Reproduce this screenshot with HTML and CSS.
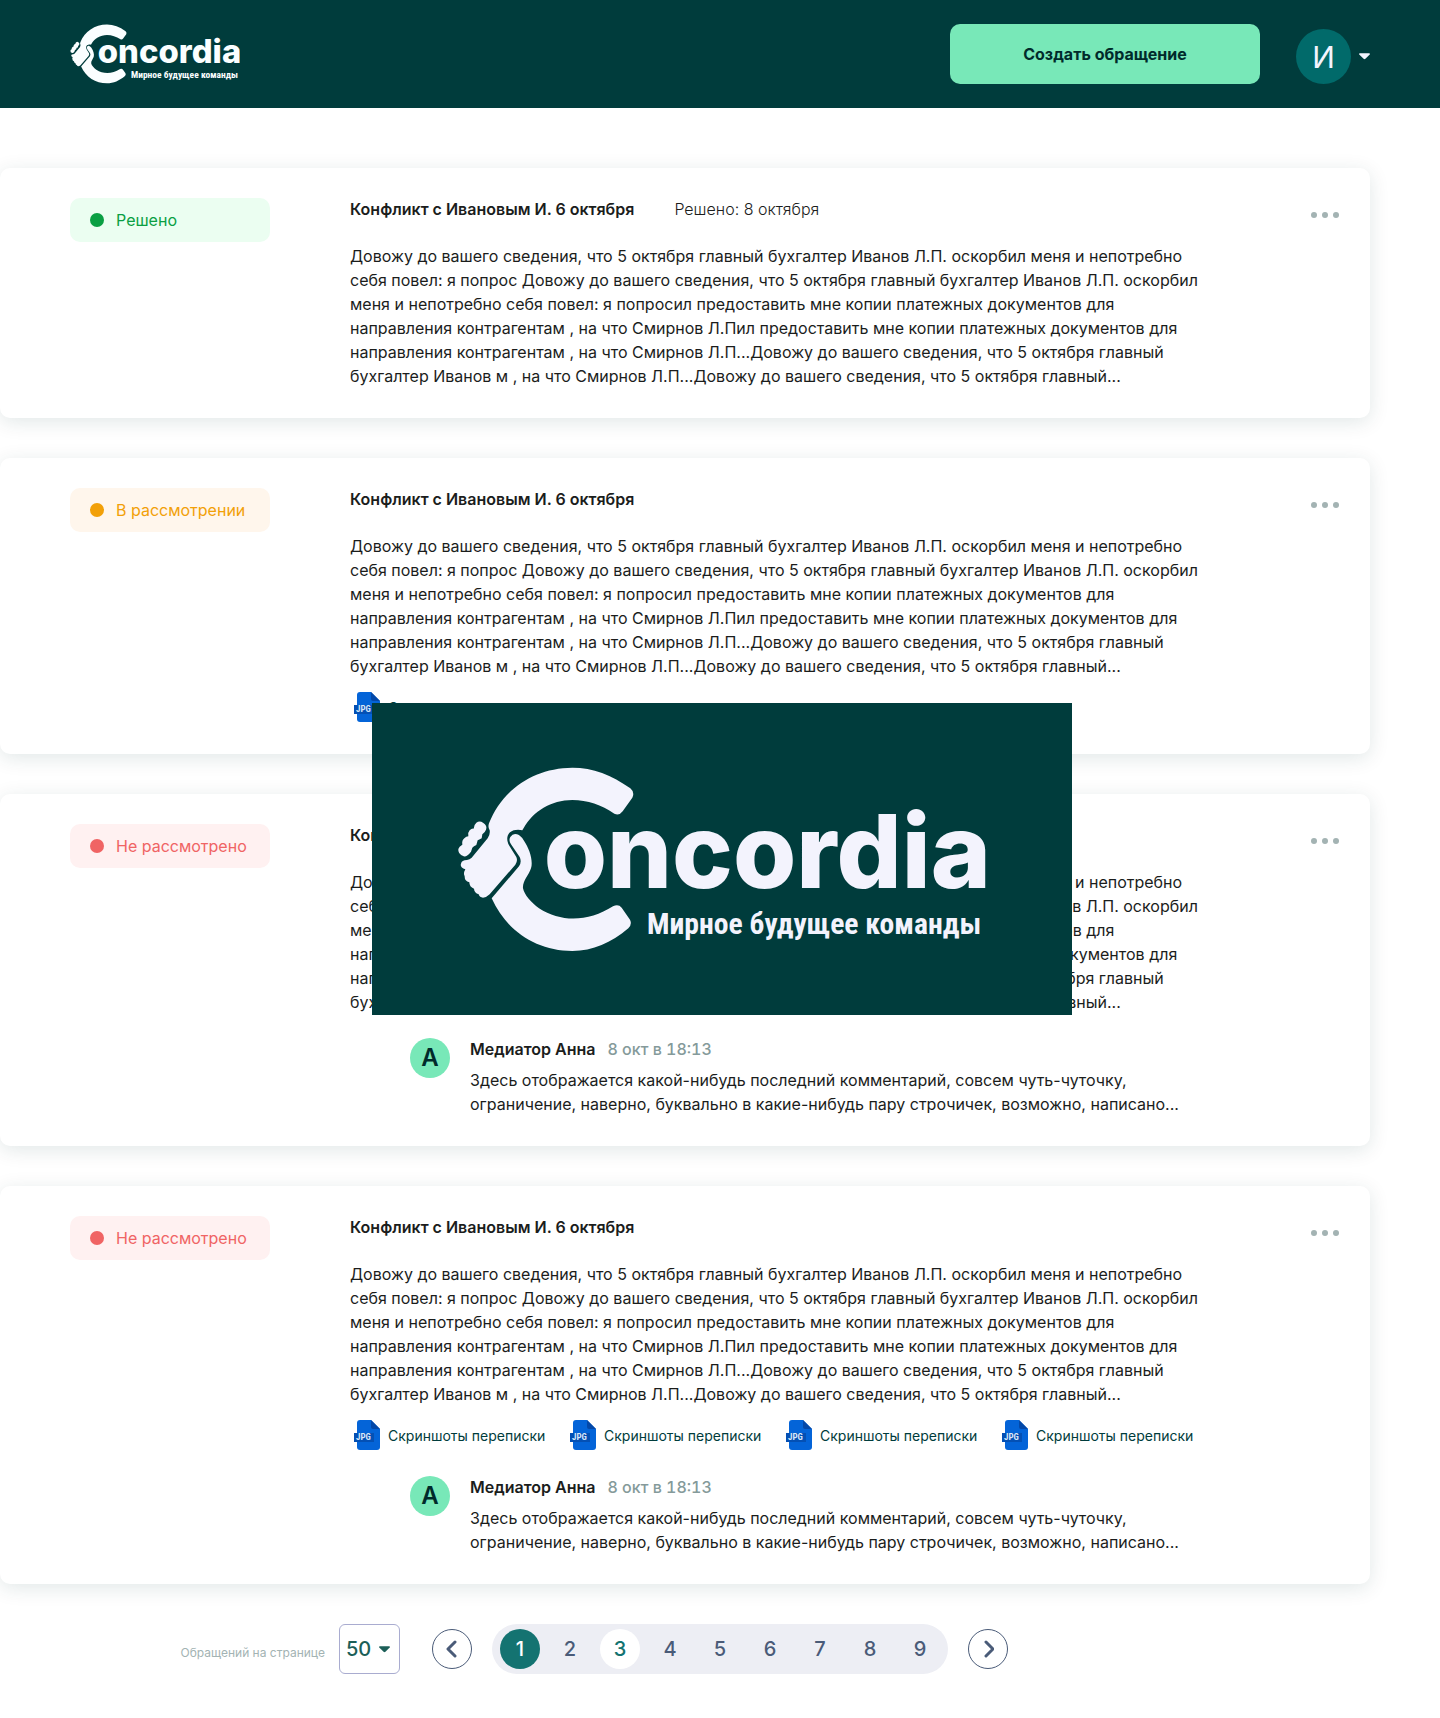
FILE: index.html
```html
<!DOCTYPE html>
<html lang="ru">
<head>
<meta charset="utf-8">
<meta name="viewport" content="width=device-width, initial-scale=1">
<title>Concordia — обращения</title>
<link rel="stylesheet" href="styles.css">
</head>
<body>
<svg class="sprite" aria-hidden="true">
  <symbol id="logo" viewBox="54 45 1590 561">
    <path d="M150 217C190 115 285 51 400 50C462 50 518 72 574 112Q588 124 580 140L551 181Q541 195 526 188C487 162 446 147 400 147C336 148 283 180 254 231L250 238C238 235 222 236 213 244C202 254 203 270 210 283L232 318Q237 330 229 341L152 430Q142 440 132 440Q122 440 119 430Q106 426 105 413Q91 408 91 394Q76 390 77 375Q72 368 79 355Q62 350 66 338Q68 327 84 327Q92 326 98 320L146 262Q154 250 152 238Q146 228 150 217Z"/>
    <path d="M112 215Q122 208 132 215Q146 224 141 236Q138 244 130 250L128 262Q120 266 116 268L112 282Q104 286 100 290L96 302Q84 318 74 316Q56 310 58 294Q60 286 70 281Q68 268 76 262Q82 256 88 256Q86 244 92 238Q98 232 104 233Q104 222 112 215Z"/>
    <path d="M214 258Q222 246 234 250Q246 254 254 268C272 294 283 330 276 352C270 372 250 390 252 412C256 432 276 454 300 472C368 516 450 512 522 466Q538 458 548 470L573 506Q580 520 568 532C516 576 462 600 400 600C292 600 202 540 158 442L240 346Q249 333 242 318L216 280Q208 268 214 258Z"/>
    <text class="logo-name" x="314" y="412">oncordia</text>
    <text class="logo-tagline" x="624" y="550">Мирное будущее команды</text>
  </symbol>
  <symbol id="jpg" viewBox="0 0 38 32">
    <path fill="#0464d8" d="M10 0H21L30 9V27Q30 30 27 30H10Q7 30 7 27V3Q7 0 10 0Z"/>
    <path fill="#0448a8" d="M21 0L30 9H23Q21 9 21 7Z"/>
    <path fill="#0450b4" d="M4 13H24V22H4Z"/>
    <text class="jpg-text" x="6" y="20">JPG</text>
  </symbol>
  <symbol id="dots" viewBox="0 0 28 6">
    <circle cx="3" cy="3" r="3"/><circle cx="14" cy="3" r="3"/><circle cx="25" cy="3" r="3"/>
  </symbol>
  <symbol id="caret" viewBox="0 0 12 7">
    <path d="M1 0H11Q12 0 12 1L7 6Q6 7 5 6L0 1Q0 0 1 0Z"/>
  </symbol>
</svg>

<header class="header">
  <a class="brand" href="#" aria-label="Concordia"><svg><use href="#logo"/></svg></a>
  <button class="create" type="button">Создать обращение</button>
  <button class="user" type="button" aria-label="Профиль">
    <span class="user-avatar">И</span>
    <svg class="caret"><use href="#caret"/></svg>
  </button>
</header>

<main class="main">
  <article class="card">
    <div class="status status-done">Решено</div>
    <div class="content">
      <div class="heading"><h2>Конфликт с Ивановым И. 6 октября</h2><span class="resolved">Решено: 8 октября</span></div>
      <p>Довожу до вашего сведения, что 5 октября главный бухгалтер Иванов Л.П. оскорбил меня и непотребно себя повел: я попрос Довожу до вашего сведения, что 5 октября главный бухгалтер Иванов Л.П. оскорбил меня и непотребно себя повел: я попросил предоставить мне копии платежных документов для направления контрагентам , на что Смирнов Л.Пил предоставить мне копии платежных документов для направления контрагентам , на что Смирнов Л.П...Довожу до вашего сведения, что 5 октября главный бухгалтер Иванов м , на что Смирнов Л.П...Довожу до вашего сведения, что 5 октября главный...</p>
    </div>
    <button class="menu" type="button" aria-label="Действия"><svg><use href="#dots"/></svg></button>
  </article>

  <article class="card">
    <div class="status status-review">В рассмотрении</div>
    <div class="content">
      <div class="heading"><h2>Конфликт с Ивановым И. 6 октября</h2></div>
      <p>Довожу до вашего сведения, что 5 октября главный бухгалтер Иванов Л.П. оскорбил меня и непотребно себя повел: я попрос Довожу до вашего сведения, что 5 октября главный бухгалтер Иванов Л.П. оскорбил меня и непотребно себя повел: я попросил предоставить мне копии платежных документов для направления контрагентам , на что Смирнов Л.Пил предоставить мне копии платежных документов для направления контрагентам , на что Смирнов Л.П...Довожу до вашего сведения, что 5 октября главный бухгалтер Иванов м , на что Смирнов Л.П...Довожу до вашего сведения, что 5 октября главный...</p>
      <div class="files">
        <a href="#"><svg><use href="#jpg"/></svg>Скриншоты переписки</a>
      </div>
    </div>
    <button class="menu" type="button" aria-label="Действия"><svg><use href="#dots"/></svg></button>
  </article>

  <article class="card">
    <div class="status status-new">Не рассмотрено</div>
    <div class="content">
      <div class="heading"><h2>Конфликт с Ивановым И. 6 октября</h2></div>
      <p>Довожу до вашего сведения, что 5 октября главный бухгалтер Иванов Л.П. оскорбил меня и непотребно себя повел: я попрос Довожу до вашего сведения, что 5 октября главный бухгалтер Иванов Л.П. оскорбил меня и непотребно себя повел: я попросил предоставить мне копии платежных документов для направления контрагентам , на что Смирнов Л.Пил предоставить мне копии платежных документов для направления контрагентам , на что Смирнов Л.П...Довожу до вашего сведения, что 5 октября главный бухгалтер Иванов м , на что Смирнов Л.П...Довожу до вашего сведения, что 5 октября главный...</p>
      <div class="comment">
        <span class="comment-avatar">А</span>
        <div>
          <div class="comment-head"><b>Медиатор Анна</b><time>8 окт в 18:13</time></div>
          <p>Здесь отображается какой-нибудь последний комментарий, совсем чуть-чуточку, ограничение, наверно, буквально в какие-нибудь пару строчичек, возможно, написано...</p>
        </div>
      </div>
    </div>
    <button class="menu" type="button" aria-label="Действия"><svg><use href="#dots"/></svg></button>
  </article>

  <article class="card">
    <div class="status status-new">Не рассмотрено</div>
    <div class="content">
      <div class="heading"><h2>Конфликт с Ивановым И. 6 октября</h2></div>
      <p>Довожу до вашего сведения, что 5 октября главный бухгалтер Иванов Л.П. оскорбил меня и непотребно себя повел: я попрос Довожу до вашего сведения, что 5 октября главный бухгалтер Иванов Л.П. оскорбил меня и непотребно себя повел: я попросил предоставить мне копии платежных документов для направления контрагентам , на что Смирнов Л.Пил предоставить мне копии платежных документов для направления контрагентам , на что Смирнов Л.П...Довожу до вашего сведения, что 5 октября главный бухгалтер Иванов м , на что Смирнов Л.П...Довожу до вашего сведения, что 5 октября главный...</p>
      <div class="files">
        <a href="#"><svg><use href="#jpg"/></svg>Скриншоты переписки</a>
        <a href="#"><svg><use href="#jpg"/></svg>Скриншоты переписки</a>
        <a href="#"><svg><use href="#jpg"/></svg>Скриншоты переписки</a>
        <a href="#"><svg><use href="#jpg"/></svg>Скриншоты переписки</a>
      </div>
      <div class="comment">
        <span class="comment-avatar">А</span>
        <div>
          <div class="comment-head"><b>Медиатор Анна</b><time>8 окт в 18:13</time></div>
          <p>Здесь отображается какой-нибудь последний комментарий, совсем чуть-чуточку, ограничение, наверно, буквально в какие-нибудь пару строчичек, возможно, написано...</p>
        </div>
      </div>
    </div>
    <button class="menu" type="button" aria-label="Действия"><svg><use href="#dots"/></svg></button>
  </article>

  <div class="splash"><svg role="img" aria-label="Concordia"><use href="#logo"/></svg></div>
</main>

<footer class="footer">
  <div class="page-size">
    <label for="size">Обращений на странице</label>
    <div class="select">
      <select id="size"><option>50</option></select>
      <svg class="caret"><use href="#caret"/></svg>
    </div>
  </div>
  <nav class="pager" aria-label="Страницы">
    <button class="arrow" type="button" aria-label="Назад"><svg viewBox="0 0 12 18"><path d="M9 2L2 9L9 16"/></svg></button>
    <div class="pages">
      <a class="current" href="#">1</a><a href="#">2</a><a class="hover" href="#">3</a><a href="#">4</a><a href="#">5</a><a href="#">6</a><a href="#">7</a><a href="#">8</a><a href="#">9</a>
    </div>
    <button class="arrow" type="button" aria-label="Вперёд"><svg viewBox="0 0 12 18"><path d="M4 2L11 9L4 16"/></svg></button>
  </nav>
</footer>
</body>
</html>
```
FILE: styles.css
```css
* {
  box-sizing: border-box;
}

body {
  margin: 0;
  background: #fff;
  color: #1b1d1c;
  font: 400 16px/24px Inter, "Liberation Sans", sans-serif;
}

h2,
p {
  margin: 0;
}

a {
  color: inherit;
  text-decoration: none;
}

button,
select {
  margin: 0;
  padding: 0;
  border: 0;
  background: none;
  color: inherit;
  font: inherit;
  cursor: pointer;
}

svg {
  display: block;
}

.sprite {
  position: absolute;
  width: 0;
  height: 0;
}

.logo-name {
  font: 800 307px Inter, sans-serif;
}

.logo-tagline {
  font: 700 89px "Roboto Condensed", Roboto, sans-serif;
}

.jpg-text {
  fill: #d6e6fb;
  font: 700 9px "Roboto Condensed", Roboto, sans-serif;
}

/* Header */

.header {
  display: flex;
  align-items: flex-end;
  padding: 24px 70px;
  background: #003c3c;
}

.brand {
  margin-right: auto;
}

.brand svg {
  width: 170px;
  height: 60px;
  fill: #fafeff;
}

.create {
  width: 310px;
  height: 60px;
  border-radius: 10px;
  background: #78e8b8;
  color: #002b2b;
  font-weight: 700;
}

.user {
  display: flex;
  align-items: center;
  gap: 8px;
  margin-left: 36px;
  color: #f3f4fe;
}

.user-avatar {
  display: grid;
  place-items: center;
  width: 55px;
  height: 55px;
  border-radius: 50%;
  background: #016a6a;
  font-size: 30px;
}

.caret {
  width: 11px;
  height: 7px;
  fill: currentColor;
}

/* Cards */

.main {
  position: relative;
  display: grid;
  gap: 40px;
  padding: 60px 70px 40px 0;
}

.card {
  display: flex;
  align-items: flex-start;
  padding: 30px 31px 30px 70px;
  border-radius: 10px;
  background: #fff;
  box-shadow: 0 4px 20px rgba(0, 60, 60, 0.12);
}

.status {
  display: flex;
  flex: none;
  align-items: center;
  gap: 12px;
  width: 200px;
  height: 44px;
  margin-right: 80px;
  padding-left: 20px;
  border-radius: 10px;
}

.status::before {
  width: 14px;
  height: 14px;
  border-radius: 50%;
  background: currentColor;
  content: "";
}

.status-done {
  background: #ebfef1;
  color: #0a9f43;
}

.status-review {
  background: #fff6ec;
  color: #f2a008;
}

.status-new {
  background: #fff1f1;
  color: #f06464;
}

.content {
  max-width: 856px;
}

.heading {
  display: flex;
  gap: 40px;
  margin-bottom: 24px;
  line-height: 22px;
}

.heading h2 {
  font-size: 16px;
  font-weight: 600;
}

.resolved {
  font-weight: 300;
}

.menu {
  display: grid;
  place-items: center;
  width: 28px;
  height: 34px;
  margin-left: auto;
}

.menu svg {
  width: 28px;
  height: 6px;
  fill: #a3b3b3;
}

.files {
  display: flex;
  gap: 20px;
  margin-top: 14px;
  color: #003c3c;
  font-size: 14px;
}

.files a {
  display: flex;
  width: 196px;
  height: 32px;
  line-height: 32px;
  white-space: nowrap;
}

.files svg {
  flex: none;
  width: 38px;
  height: 32px;
}

.comment {
  display: flex;
  gap: 20px;
  margin-top: 24px;
  padding-left: 60px;
}

.comment-avatar {
  display: grid;
  flex: none;
  place-items: center;
  width: 40px;
  height: 40px;
  border-radius: 50%;
  background: #78e8b8;
  color: #002b2b;
  font-size: 24px;
  font-weight: 600;
}

.comment-head {
  display: flex;
  gap: 12px;
  margin-bottom: 8px;
  line-height: 22px;
}

.comment-head b {
  font-weight: 600;
}

.comment-head time {
  color: #859a9a;
  font-weight: 500;
  font-variant-numeric: tabular-nums;
}

/* Logo panel shown over the list */

.splash {
  position: absolute;
  top: 595px;
  left: 50%;
  display: grid;
  place-items: center;
  width: 700px;
  height: 312px;
  margin-left: -348px;
  background: #003c3c;
}

.splash svg {
  width: 530px;
  height: 187px;
  fill: #f3f3fd;
}

/* Pagination */

.footer {
  display: grid;
  grid-template-columns: 1fr auto 1fr;
  padding-bottom: 44px;
}

.page-size {
  display: flex;
  align-items: center;
  justify-content: flex-end;
  gap: 14px;
  margin-right: 32px;
}

.page-size label {
  padding-top: 8px;
  color: #a3b3b3;
  font-size: 12px;
}

.select {
  position: relative;
  color: #1c5f58;
}

.select select {
  width: 61px;
  height: 50px;
  padding-left: 6px;
  border: 1px solid #a9acd0;
  border-radius: 6px;
  appearance: none;
  font-size: 20px;
  font-weight: 500;
}

.select .caret {
  position: absolute;
  top: 22px;
  right: 10px;
  pointer-events: none;
}

.pager {
  display: flex;
  align-items: center;
  gap: 20px;
}

.arrow {
  display: grid;
  place-items: center;
  width: 40px;
  height: 40px;
  border: 1px solid #4a5b78;
  border-radius: 50%;
}

.arrow svg {
  width: 12px;
  height: 18px;
  fill: none;
  stroke: #4a5b78;
  stroke-width: 3;
  stroke-linecap: round;
  stroke-linejoin: round;
}

.pages {
  display: flex;
  gap: 10px;
  padding: 5px 8px;
  border-radius: 25px;
  background: #edeef4;
  color: #4a5b78;
  font-size: 20px;
  font-weight: 500;
}

.pages a {
  width: 40px;
  border-radius: 50%;
  line-height: 40px;
  text-align: center;
}

.pages .current {
  background: #147371;
  color: #fff;
}

.pages .hover {
  background: #fff;
  color: #147371;
}
```
